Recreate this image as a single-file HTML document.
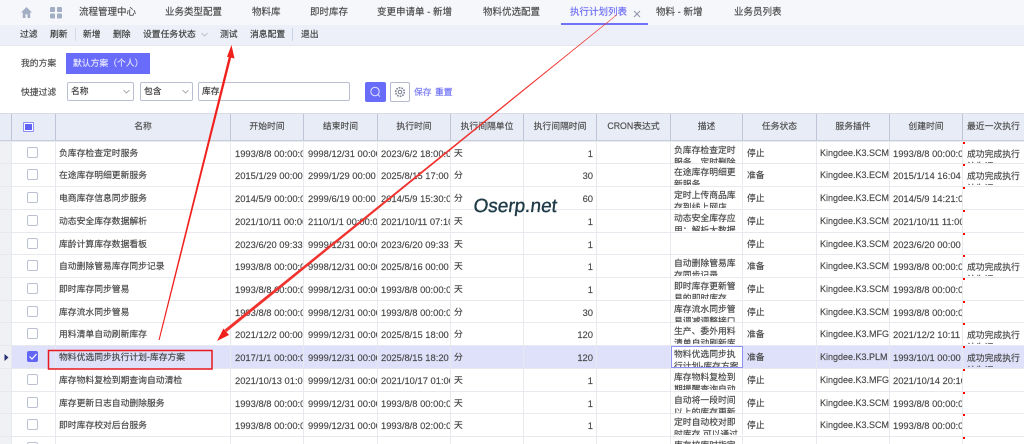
<!DOCTYPE html>
<html lang="zh"><head><meta charset="utf-8"><title>执行计划列表</title>
<style>
*{box-sizing:border-box}
html,body{margin:0;padding:0;width:1024px;height:444px;overflow:hidden;background:#fff}
body{font-family:"Liberation Sans","Noto Sans CJK SC",sans-serif;color:#444;position:relative;-webkit-text-stroke:.14px currentColor}
#w{position:absolute;left:0;top:0;width:1024px;height:444px;overflow:hidden;filter:blur(.3px)}
.a{position:absolute;white-space:nowrap}
.t{font-size:9.5px;line-height:14px;top:6px;color:#4a4a4a}
.b{font-size:8.8px;line-height:14px;top:27px;color:#383838}
.l{font-size:8.8px;line-height:14px;color:#4a4a4a}
.box{background:#fff;border:1px solid #b9bfd0;border-radius:2px;height:19px;top:82px;font-size:8.8px;line-height:17px;padding-left:3px;color:#383838}
.r{position:absolute;left:0;width:1024px;height:24px;border-top:1px solid #e8e9ee;font-size:8.8px;color:#454545;background:#fff}
.r>div{position:absolute;top:0;height:23px;line-height:23px;white-space:nowrap;overflow:hidden;border-right:1px solid #e8e9ee;padding-left:3px}
.r>div:nth-child(1){left:0;width:12px;background:#f0f1f5;padding:0}
.r>div:nth-child(2){left:12px;width:44px;padding:0}
.r>div:nth-child(3){left:56px;width:175px}
.r>div:nth-child(4){left:231px;width:73px;font-size:9.4px;padding-left:4px}
.r>div:nth-child(5){left:304px;width:74px;font-size:9.4px;padding-left:4px}
.r>div:nth-child(6){left:378px;width:73px;font-size:9.4px;padding-left:3px}
.r>div:nth-child(7){left:451px;width:73px}
.r>div:nth-child(8){left:524px;width:73px;font-size:9.4px;text-align:right;padding:0 3px 0 0}
.r>div:nth-child(9){left:597px;width:74px}
.r>div:nth-child(10){left:671px;width:72px;height:21px;line-height:12px;padding:2px 0 0 3px}
.r>div:nth-child(11){left:743px;width:74px;padding-left:4px}
.r>div:nth-child(12){left:817px;width:73px;font-size:9px;padding-left:3px}
.r>div:nth-child(13){left:890px;width:73px;font-size:9.4px;padding-left:3px}
.r>div:nth-child(14){left:963px;width:61px;height:21px;border-right:0;line-height:12px;padding:6px 0 0 4px}
.r i{position:absolute;left:15px;top:5px;width:11px;height:11px;background:#fff;border:1px solid #bcc1d2;border-radius:2px}
.r u{position:absolute;left:963px;top:0;width:2px;height:2px;background:#f00}
.s,.s>div{background:#dfe0fa!important}
.h{position:absolute;top:114px;height:27px;background:#e8ecf6;border-right:1px solid #bfc5d6;border-bottom:1px solid #c9cedd;font-size:8.8px;line-height:25px;text-align:center;color:#4a4a4a;white-space:nowrap;overflow:hidden}
</style></head><body><div id="w">
<div class="a" style="left:0;top:0;width:1024px;height:25px;background:#f6f7fb"></div>
<div class="a" style="left:0;top:25px;width:1024px;height:21px;background:#edf0f8;border-bottom:1px solid #e6e8f0"></div>
<svg class="a" style="left:20px;top:6px" width="13" height="13" viewBox="0 0 13 13"><path d="M6.5 1 1 6.500h1.800V12h2.700V8.300h2V12h2.700V6.500H12z" fill="#a3aec4"/></svg>
<svg class="a" style="left:49px;top:6px" width="14" height="13" viewBox="0 0 14 13"><rect x="1" y="1" width="5" height="5" rx="1" fill="#a3aec4"/><rect x="8" y="1" width="5" height="5" rx="1" fill="#a3aec4"/><rect x="1" y="7.500" width="5" height="5" rx="1" fill="#a3aec4"/><rect x="8" y="7.500" width="5" height="5" rx="1" fill="#a3aec4"/></svg>
<div class="a t" style="left:79px">流程管理中心</div>
<div class="a t" style="left:165px">业务类型配置</div>
<div class="a t" style="left:252px">物料库</div>
<div class="a t" style="left:310px">即时库存</div>
<div class="a t" style="left:377px">变更申请单 - 新增</div>
<div class="a t" style="left:483px">物料优选配置</div>
<div class="a t" style="left:570px;color:#6a6cf5">执行计划列表</div>
<svg class="a" style="left:633px;top:10px" width="8" height="8" viewBox="0 0 8 8"><path d="M1 1l6 6M7 1L1 7" stroke="#8f93a8" stroke-width="1"/></svg>
<div class="a" style="left:561px;top:23px;width:87px;height:2px;background:#7073f8"></div>
<div class="a t" style="left:656px">物料 - 新增</div>
<div class="a t" style="left:734px">业务员列表</div>

<div class="a b" style="left:20px">过滤</div><div class="a b" style="left:50px">刷新</div>
<div class="a" style="left:75px;top:28px;width:1px;height:13px;background:#d5dae6"></div>
<div class="a b" style="left:83px">新增</div><div class="a b" style="left:113px">删除</div>
<div class="a b" style="left:143px">设置任务状态</div>
<svg class="a" style="left:201px;top:32px" width="7" height="5" viewBox="0 0 7 5"><path d="M.5 1l3 3 3-3" fill="none" stroke="#b3b7c6" stroke-width=".8"/></svg>
<div class="a b" style="left:220px">测试</div><div class="a b" style="left:250px">消息配置</div>
<div class="a" style="left:292px;top:28px;width:1px;height:13px;background:#c9d3e6"></div>
<div class="a b" style="left:301px">退出</div>

<div class="a l" style="left:21px;top:56px">我的方案</div>
<div class="a" style="left:66px;top:53px;width:84px;height:21px;background:#696cfb;color:#e8e8ff;font-size:8.800px;line-height:21px;padding-left:7px">默认方案（个人）</div>
<div class="a l" style="left:21px;top:85px">快捷过滤</div>
<div class="a box" style="left:67px;width:67px">名称</div>
<div class="a box" style="left:140px;width:53px">包含</div>
<div class="a box" style="left:198px;width:152px">库存</div>
<svg class="a" style="left:123px;top:89px" width="7" height="5" viewBox="0 0 7 5"><path d="M.5 1l3 3 3-3" fill="none" stroke="#999" stroke-width=".8"/></svg>
<svg class="a" style="left:182px;top:89px" width="7" height="5" viewBox="0 0 7 5"><path d="M.5 1l3 3 3-3" fill="none" stroke="#999" stroke-width=".8"/></svg>
<div class="a" style="left:365px;top:82px;width:21px;height:20px;background:#696cfb;border-radius:2px"></div>
<svg class="a" style="left:369px;top:85px" width="13" height="14" viewBox="0 0 13 14"><circle cx="6" cy="6.500" r="4.200" fill="none" stroke="#e4e5ff" stroke-width="1"/><path d="M9 9.700l2 2" stroke="#e4e5ff" stroke-width="1"/></svg>
<div class="a" style="left:390px;top:82px;width:20px;height:20px;background:#fff;border:1px solid #b6bbcc;border-radius:2px"></div>
<svg class="a" style="left:394px;top:86px" width="12" height="12" viewBox="0 0 12 12"><circle cx="6" cy="6" r="1.800" fill="none" stroke="#777c8c"/><circle cx="6" cy="6" r="4.300" fill="none" stroke="#777c8c" stroke-width="1.600" stroke-dasharray="1.600 1.100"/></svg>
<div class="a l" style="left:414px;top:85px;color:#7a7cf0">保存</div>
<div class="a l" style="left:435px;top:85px;color:#6a6cf5">重置</div>

<div class="a" style="left:0;top:113px;width:1024px;height:2px;background:#d8dbe4"></div>
<div class="h" style="left:0;width:12px"></div>
<div class="h" style="left:12px;width:44px"></div>
<div class="h" style="left:56px;width:175px">名称</div>
<div class="h" style="left:231px;width:73px">开始时间</div>
<div class="h" style="left:304px;width:74px">结束时间</div>
<div class="h" style="left:378px;width:73px">执行时间</div>
<div class="h" style="left:451px;width:73px">执行间隔单位</div>
<div class="h" style="left:524px;width:73px">执行间隔时间</div>
<div class="h" style="left:597px;width:74px">CRON表达式</div>
<div class="h" style="left:671px;width:72px">描述</div>
<div class="h" style="left:743px;width:74px">任务状态</div>
<div class="h" style="left:817px;width:73px">服务插件</div>
<div class="h" style="left:890px;width:73px">创建时间</div>
<div class="h" style="left:963px;width:61px;border-right:0;text-align:left;padding-left:4px">最近一次执行</div>
<div class="a" style="left:23px;top:122px;width:11px;height:10px;background:#fff;border:1px solid #8a8cf8;border-radius:1px"></div>
<div class="a" style="left:25px;top:124px;width:7px;height:6px;background:#5f62f5"></div>

<div class="r" style="top:141px"><div></div><div><i></i></div><div>负库存检查定时服务</div><div>1993/8/8 00:00:00</div><div>9998/12/31 00:00</div><div>2023/6/2 18:00:00</div><div>天</div><div>1</div><div></div><div>负库存检查定时<br>服务，定时删除</div><div>停止</div><div>Kingdee.K3.SCM</div><div>1993/8/8 00:00:00</div><div>成功完成执行<br>认为证</div><u></u></div>
<div class="r" style="top:163px"><div></div><div><i></i></div><div>在途库存明细更新服务</div><div>2015/1/29 00:00</div><div>2999/1/29 00:00</div><div>2025/8/15 17:00</div><div>分</div><div>30</div><div></div><div>在途库存明细更<br>新服务</div><div>准备</div><div>Kingdee.K3.ECM</div><div>2015/1/14 16:04</div><div>成功完成执行<br>认为证</div><u></u></div>
<div class="r" style="top:186px"><div></div><div><i></i></div><div>电商库存信息同步服务</div><div>2014/5/9 00:00:00</div><div>2999/6/19 00:00</div><div>2014/5/9 15:30:00</div><div>分</div><div>60</div><div></div><div>定时上传商品库<br>存到线上网店</div><div>停止</div><div>Kingdee.K3.ECM</div><div>2014/5/9 14:21:00</div><div></div><u></u></div>
<div class="r" style="top:209px"><div></div><div><i></i></div><div>动态安全库存数据解析</div><div>2021/10/11 00:00</div><div>2110/1/1 00:00:00</div><div>2021/10/11 07:10</div><div>天</div><div>1</div><div></div><div>动态安全库存应<br>用：解析大数据</div><div>停止</div><div>Kingdee.K3.SCM</div><div>2021/10/11 11:00</div><div></div><u></u></div>
<div class="r" style="top:232px"><div></div><div><i></i></div><div>库龄计算库存数据看板</div><div>2023/6/20 09:33</div><div>9999/12/31 00:00</div><div>2023/6/20 09:33</div><div>天</div><div>1</div><div></div><div></div><div>停止</div><div>Kingdee.K3.SCM</div><div>2023/6/20 00:00</div><div></div><u></u></div>
<div class="r" style="top:254px"><div></div><div><i></i></div><div>自动删除管易库存同步记录</div><div>1993/8/8 00:00:00</div><div>9998/12/31 00:00</div><div>2025/8/16 00:00</div><div>天</div><div>1</div><div></div><div>自动删除管易库<br>存同步记录</div><div>准备</div><div>Kingdee.K3.SCM</div><div>1993/8/8 00:00:00</div><div>成功完成执行<br>认为证</div><u></u></div>
<div class="r" style="top:277px"><div></div><div><i></i></div><div>即时库存同步管易</div><div>1993/8/8 00:00:00</div><div>9998/12/31 00:00</div><div>1993/8/8 00:00:00</div><div>天</div><div>1</div><div></div><div>即时库存更新管<br>易的即时库存</div><div>停止</div><div>Kingdee.K3.SCM</div><div>1993/8/8 00:00:00</div><div></div><u></u></div>
<div class="r" style="top:300px"><div></div><div><i></i></div><div>库存流水同步管易</div><div>1993/8/8 00:00:00</div><div>9998/12/31 00:00</div><div>1993/8/8 00:00:00</div><div>分</div><div>30</div><div></div><div>库存流水同步管<br>易调减调整接口</div><div>停止</div><div>Kingdee.K3.SCM</div><div>1993/8/8 00:00:00</div><div></div><u></u></div>
<div class="r" style="top:322px"><div></div><div><i></i></div><div>用料清单自动刷新库存</div><div>2021/12/2 00:00</div><div>9999/12/31 00:00</div><div>2025/8/15 18:00</div><div>分</div><div>120</div><div></div><div>生产、委外用料<br>清单自动刷新库</div><div>准备</div><div>Kingdee.K3.MFG</div><div>2021/12/2 10:11</div><div>成功完成执行<br>认为证</div><u></u></div>
<div class="r s" style="top:345px"><div style="background:#f0f1f5!important"></div><div><i style="background:#6366f5;border-color:#6366f5"></i></div><div>物料优选同步执行计划-库存方案</div><div>2017/1/1 00:00:00</div><div>9999/12/31 00:00</div><div>2025/8/15 18:20</div><div>分</div><div>120</div><div></div><div style="background:#fff!important;border:1px solid #8d90f5;height:22px;padding:1px 0 0 2px">物料优选同步执<br>行计划-库存方案</div><div>准备</div><div>Kingdee.K3.PLM</div><div>1993/10/1 00:00</div><div>成功完成执行<br>认为证</div><u></u></div>
<div class="r" style="top:368px"><div></div><div><i></i></div><div>库存物料复检到期查询自动清检</div><div>2021/10/13 01:00</div><div>9999/12/31 00:00</div><div>2021/10/17 01:00</div><div>天</div><div>1</div><div></div><div>库存物料复检到<br>期提醒查询自动</div><div>停止</div><div>Kingdee.K3.MFG</div><div>2021/10/14 20:10</div><div></div><u></u></div>
<div class="r" style="top:391px"><div></div><div><i></i></div><div>库存更新日志自动删除服务</div><div>1993/8/8 00:00:00</div><div>9999/12/31 00:00</div><div>1993/8/8 00:00:00</div><div>天</div><div>1</div><div></div><div>自动将一段时间<br>以上的库存更新</div><div>停止</div><div>Kingdee.K3.SCM</div><div>1993/8/8 00:00:00</div><div></div><u></u></div>
<div class="r" style="top:413px"><div></div><div><i></i></div><div>即时库存校对后台服务</div><div>1993/8/8 00:00:00</div><div>9999/12/31 00:00</div><div>1993/8/8 02:00:00</div><div>天</div><div>1</div><div></div><div>定时自动校对即<br>时库存,可以通过</div><div>停止</div><div>Kingdee.K3.SCM</div><div>1993/8/8 00:00:00</div><div></div><u></u></div>
<div class="r" style="top:436px"><div></div><div><i></i></div><div></div><div></div><div></div><div></div><div></div><div></div><div></div><div>库存校库时指定</div><div></div><div></div><div></div><div></div><u></u></div>

<svg class="a" style="left:0;top:0" width="1024" height="444" viewBox="0 0 1024 444">
<path d="M4.500 354l4 3.500-4 3.500z" fill="#25306e"/>
<path d="M29.500 356.500l2.500 2.500 4.500-5" fill="none" stroke="#fff" stroke-width="1.200"/>
<rect x="48.500" y="350.500" width="163.500" height="18.500" fill="none" stroke="#e8181c" stroke-width="1.500"/>
<path d="M158.500 340 229 56l2.400.600L159.600 340z" fill="#f0201c"/>
<path d="M231.500 45 234.500 58.500l-7.500-1.800z" fill="#f0201c"/>
<path d="M617 15 226.500 332l-1.800-2.500L616.600 14.600z" fill="#f0322e"/>
<path d="M217 341l6.500-12.500 5.500 6.500z" fill="#f0201c"/>
</svg>
<div class="a" style="left:472px;top:195px;font-size:19px;line-height:24px;color:#1f3a47;transform:skewX(-7deg);transform-origin:0 100%;-webkit-text-stroke:.35px #1f3a47">Oserp.net</div>
</div></body></html>
